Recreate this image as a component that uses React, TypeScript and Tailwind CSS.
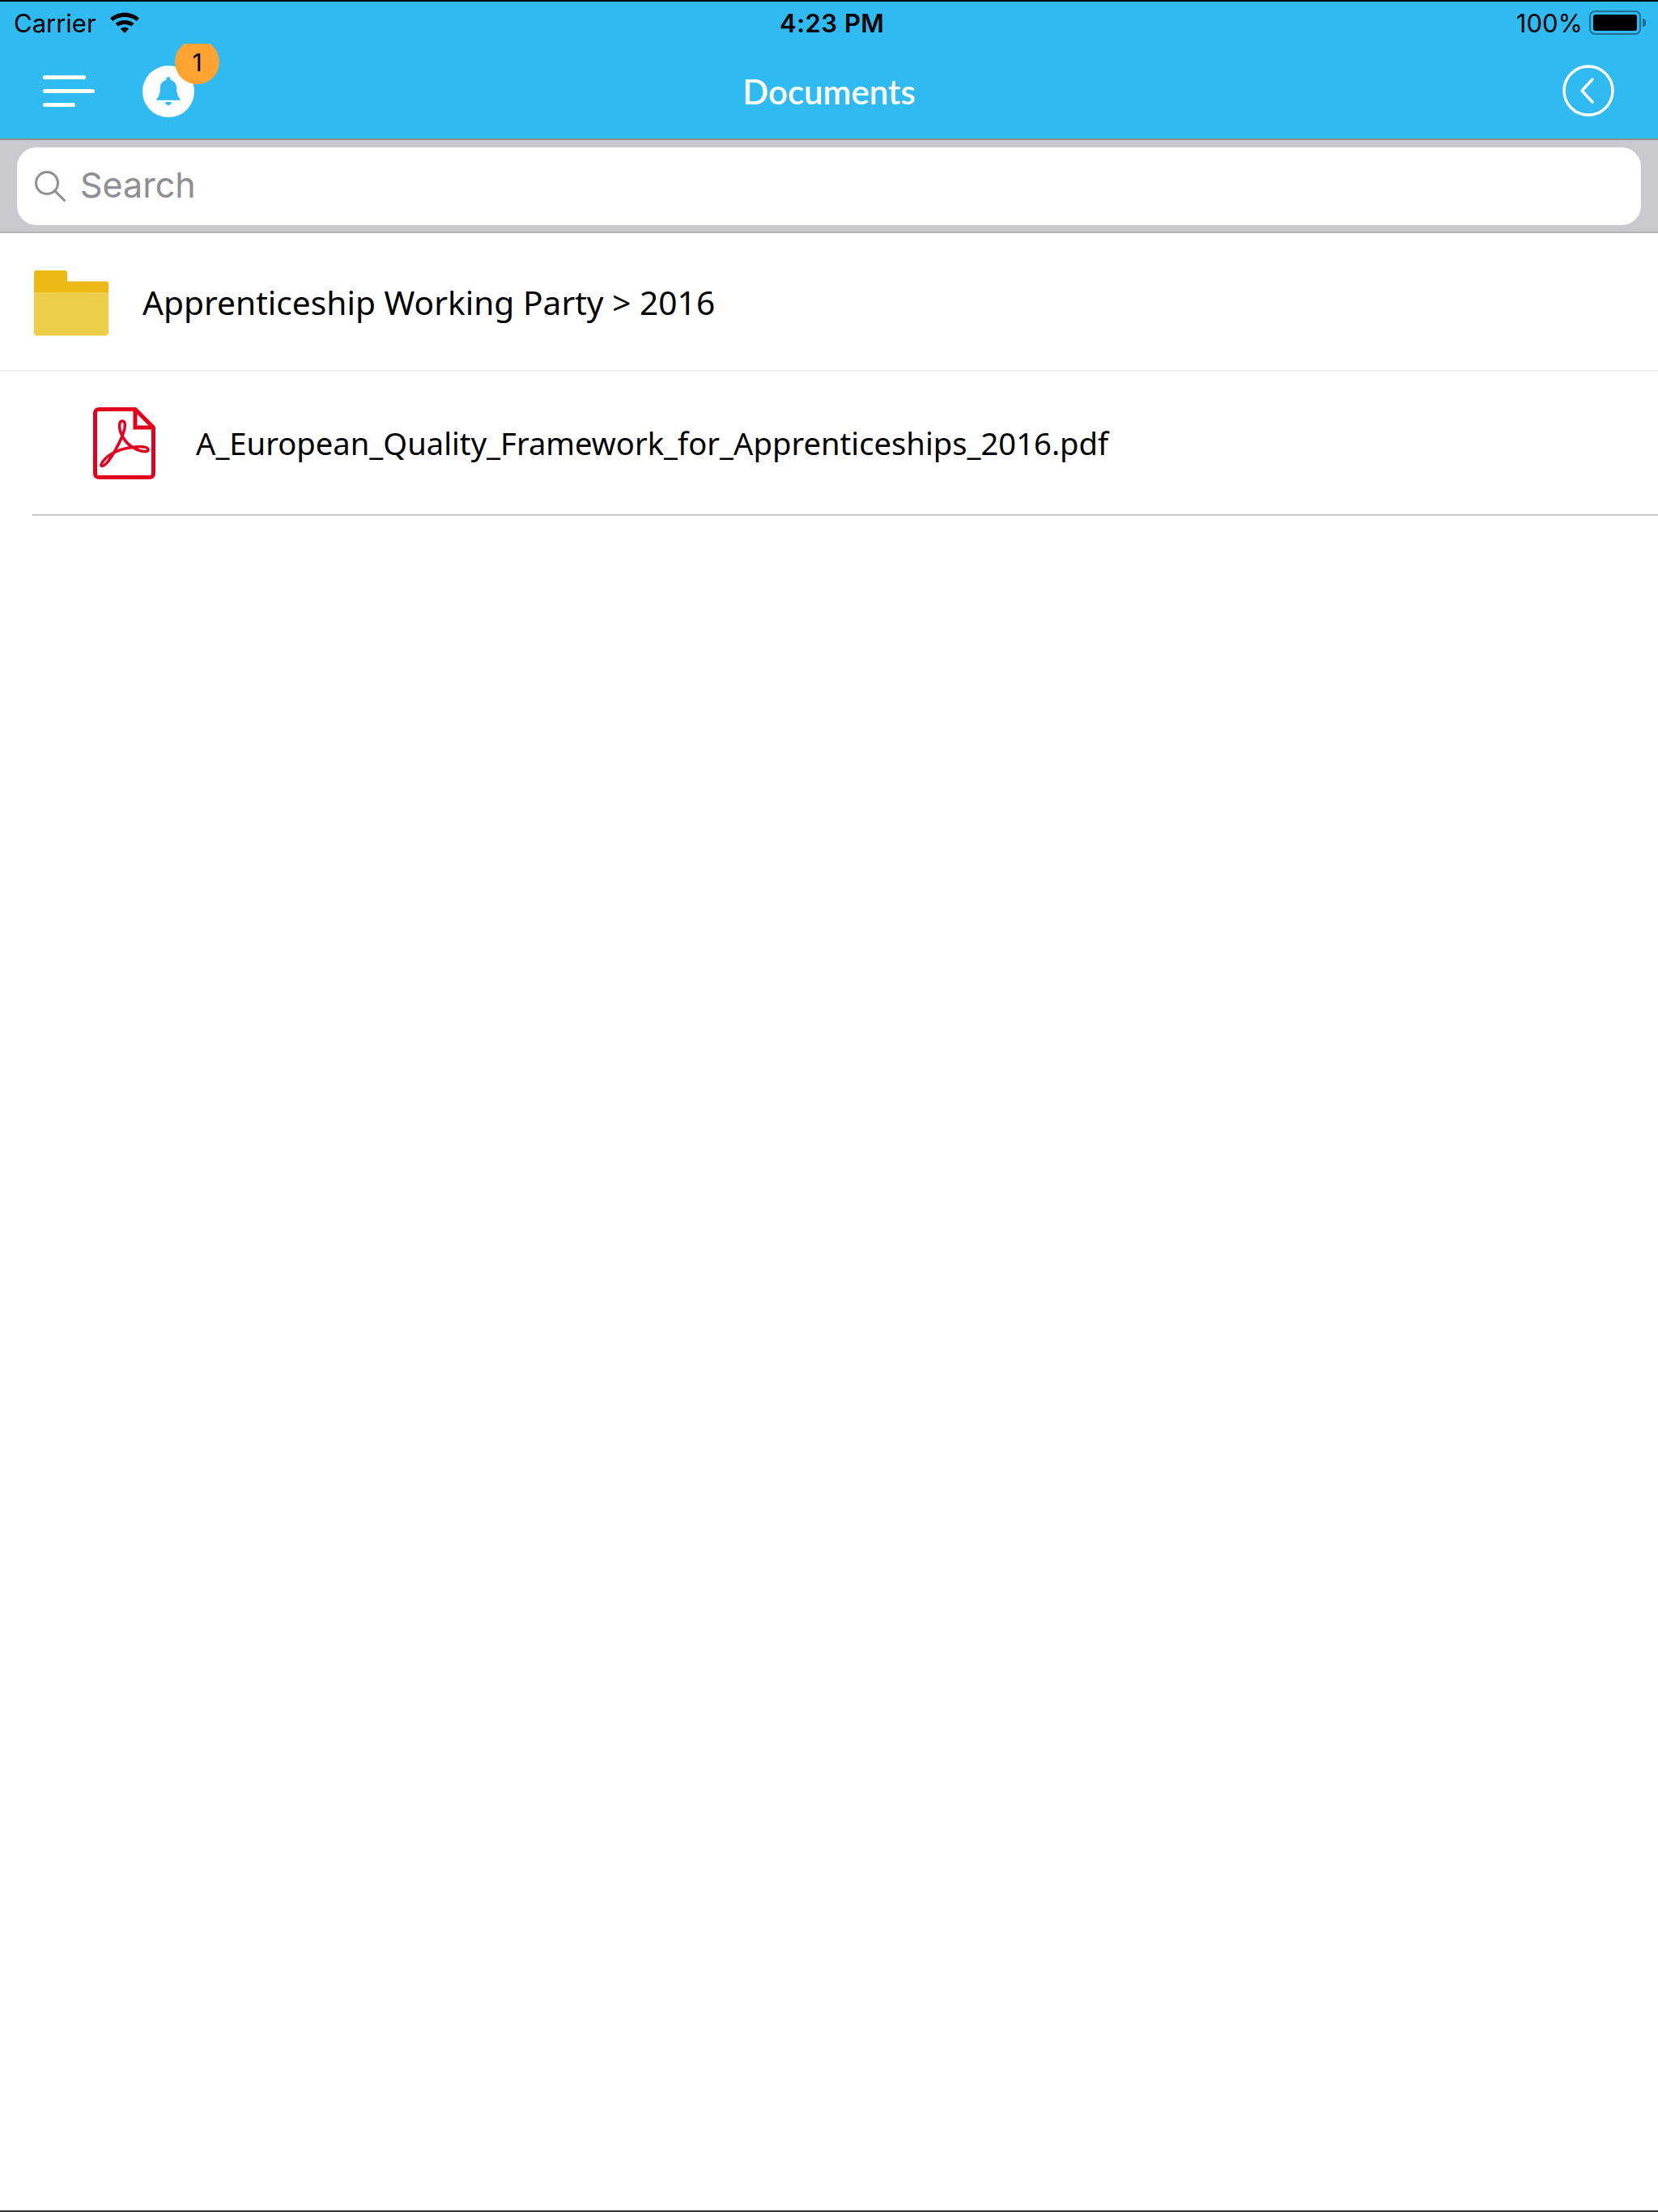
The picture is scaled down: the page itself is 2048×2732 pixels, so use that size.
import React from 'react';

const StatusBar = () => (
  <div className="h-[52px] flex items-center justify-between relative pl-[17px] pr-[15px] text-black font-['Inter',sans-serif]">
    <div className="flex items-center gap-[16px]">
      <span className="text-[31px] leading-none">Carrier</span>
      <svg width="38" height="28" viewBox="0 0 38 28" className="-mt-[1px]">
        <path d="M1 8.500C10.500 -0.500 27.500 -0.500 37 8.500L33.600 12C26 5.200 12 5.200 4.400 12Z" fill="#000" />
        <path d="M7.500 15C13.500 9.600 24.500 9.600 30.500 15L27 18.600C22.800 15 15.200 15 11 18.600Z" fill="#000" />
        <path d="M13.800 21.400C16.600 19.200 21.400 19.200 24.200 21.400L19 27Z" fill="#000" />
      </svg>
    </div>
    <span className="absolute left-[963px] text-[31px] leading-none font-semibold tracking-[0.5px]">4:23 PM</span>
    <div className="flex items-center gap-[8px]">
      <span className="text-[31px] leading-none">100%</span>
      <div className="flex items-center gap-[2px]">
        <div className="w-[64px] h-[30px] rounded-[7px] border-2 border-[#1f6f92] p-[3px]">
          <div className="w-full h-full bg-black rounded-[3px]" />
        </div>
        <div className="w-[4px] h-[10px] rounded-r-full bg-[#1f6f92]" />
      </div>
    </div>
  </div>
);

const NavBar = () => (
  <div className="h-[115px] relative overflow-hidden flex items-center justify-between pl-[53px] pr-[54px] pt-[3px]">
    <div className="flex items-center gap-[58px]">
      <svg width="65" height="40" viewBox="0 0 65 40">
        <rect x="0" y="0" width="53" height="5" rx="2.500" fill="#fff" />
        <rect x="0" y="17" width="64" height="5" rx="2.500" fill="#fff" />
        <rect x="0" y="34" width="40" height="5" rx="2.500" fill="#fff" />
      </svg>
      <div className="relative w-[64px] h-[64px] rounded-full bg-white flex items-center justify-center">
        <svg width="30" height="36" viewBox="0 0 30 36">
          <path
            d="M15 0C16.600 0 17.600 1.100 17.600 2.700V3.800C22.700 5 25.200 9 25.200 14.200C25.200 20.500 26.600 23.600 29.600 27.400C29.900 28 29.600 28.800 28.800 28.800H1.200C0.400 28.800 0.100 28 0.400 27.400C3.400 23.600 4.800 20.500 4.800 14.200C4.800 9 7.300 5 12.400 3.800V2.700C12.400 1.100 13.400 0 15 0Z"
            fill="#2fbaf2"
          />
          <path d="M11 31H19C18.600 33.600 17 35 15 35C13 35 11.400 33.600 11 31Z" fill="#2fbaf2" />
        </svg>
        <div className="absolute left-[40px] -top-[32px] w-[55px] h-[55px] rounded-full bg-[#ffa433] flex items-center justify-center text-[30px] leading-none text-black font-['Inter',sans-serif]">
          1
        </div>
      </div>
    </div>
    <span className="absolute left-0 right-0 text-center text-white text-[42px] leading-none font-semibold font-['Lato',sans-serif]">
      Documents
    </span>
    <svg width="64" height="64" viewBox="0 0 64 64" className="-mt-[3px]">
      <circle cx="32" cy="32" r="30" fill="none" stroke="#fff" strokeWidth="3.500" />
      <path d="M37 18L24 32L37 46" fill="none" stroke="#fff" strokeWidth="3.500" strokeLinecap="round" strokeLinejoin="round" />
    </svg>
  </div>
);

const FolderIcon = () => (
  <svg width="92" height="81" viewBox="0 0 92 81" className="shrink-0 mt-[3px]">
    <path d="M0 3C0 1.300 1.300 0 3 0H38C39.700 0 41 1.300 41 3V13.500H89C90.700 13.500 92 14.800 92 16.500V27H0Z" fill="#ebb815" />
    <path d="M0 27H92V77C92 79 90.700 80.500 89 80.500H3C1.300 80.500 0 79 0 77Z" fill="#eecd4a" />
  </svg>
);

const PdfIcon = () => (
  <svg width="77" height="89" viewBox="0 0 77 89" className="shrink-0">
    <path
      d="M8 2.500H52L74.500 25V81C74.500 85 73 86.500 69 86.500H8C4 86.500 2.500 85 2.500 81V8C2.500 4 4 2.500 8 2.500Z"
      fill="none"
      stroke="#e3001f"
      strokeWidth="5"
      strokeLinejoin="round"
    />
    <path d="M52 3V25H74" fill="none" stroke="#e3001f" strokeWidth="5" />
    <path
      d="M36 17C33 17 32 21 33 27C34 34 40 44 48 49C54 53 66 57 68 53C69 49 60 48 52 49C42 50 30 53 22 58C15 62 9 70 10 72C12 74 17 70 22 62C28 53 37 36 39 26C40 20 39 17 36 17Z"
      fill="none"
      stroke="#e3001f"
      strokeWidth="3.500"
      strokeLinejoin="round"
    />
  </svg>
);

const App: React.FC = () => {
  return (
    <div className="w-[2048px] h-[2732px] bg-white flex flex-col border-b-2 border-[#333] overflow-hidden">
      {/* Header */}
      <div className="bg-[#2fbaf2] border-t-2 border-black h-[171px] shrink-0">
        <StatusBar />
        <NavBar />
      </div>

      {/* Search */}
      <div className="h-[117px] shrink-0 bg-[#c9c9ce] border-t-2 border-[#8e8e8e] border-b-2 border-b-[#b6b6ba] pt-[9px] px-[21px]">
        <div className="h-[96px] bg-white rounded-[24px] flex items-center pl-[22px] gap-[18px]">
          <svg width="38" height="38" viewBox="0 0 38 38" fill="none" stroke="#8e8e93" strokeWidth="3" className="-mt-[1px]">
            <circle cx="15" cy="15" r="13.500" />
            <path d="M25 25L36.500 36.500" strokeLinecap="round" />
          </svg>
          <span className="text-[43px] leading-none -mt-[3px] text-[#8e8e93] font-['Inter',sans-serif]">Search</span>
        </div>
      </div>

      {/* Folder row */}
      <div className="h-[171px] shrink-0 flex items-center pl-[42px] gap-[42px] border-b-2 border-[#efeff4] text-black font-['Noto_Sans',sans-serif]">
        <FolderIcon />
        <span className="text-[40.700px] leading-none mt-[2px]">Apprenticeship Working Party &gt; 2016</span>
      </div>

      {/* File row */}
      <div className="ml-[40px] h-[178px] shrink-0 flex items-center pl-[75px] gap-[50px] border-b-2 border-[#c8c7cc] text-black font-['Noto_Sans',sans-serif]">
        <PdfIcon />
        <span className="text-[38.200px] leading-none">A_European_Quality_Framework_for_Apprenticeships_2016.pdf</span>
      </div>
    </div>
  );
};

export default App;
